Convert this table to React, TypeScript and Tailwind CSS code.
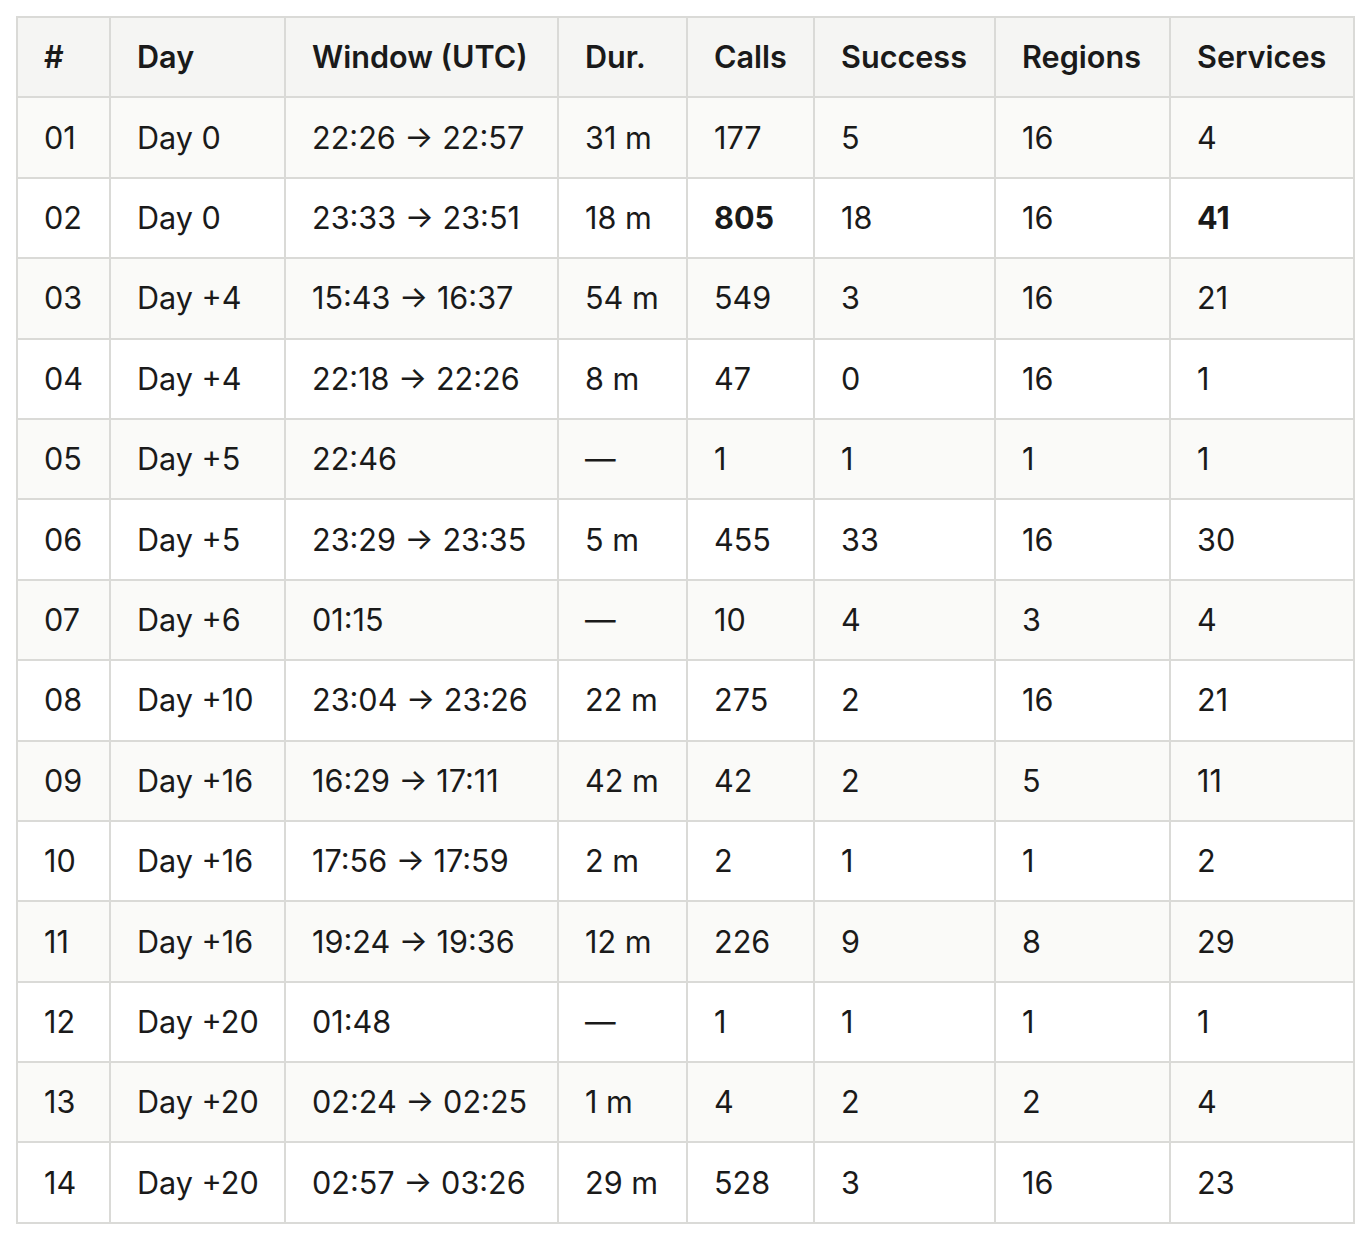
const rows: [string, string, string, string, string, string, string, string][] = [
  ["01", "Day 0", "22:26 → 22:57", "31 m", "177", "5", "16", "4"],
  ["02", "Day 0", "23:33 → 23:51", "18 m", "805", "18", "16", "41"],
  ["03", "Day +4", "15:43 → 16:37", "54 m", "549", "3", "16", "21"],
  ["04", "Day +4", "22:18 → 22:26", "8 m", "47", "0", "16", "1"],
  ["05", "Day +5", "22:46", "—", "1", "1", "1", "1"],
  ["06", "Day +5", "23:29 → 23:35", "5 m", "455", "33", "16", "30"],
  ["07", "Day +6", "01:15", "—", "10", "4", "3", "4"],
  ["08", "Day +10", "23:04 → 23:26", "22 m", "275", "2", "16", "21"],
  ["09", "Day +16", "16:29 → 17:11", "42 m", "42", "2", "5", "11"],
  ["10", "Day +16", "17:56 → 17:59", "2 m", "2", "1", "1", "2"],
  ["11", "Day +16", "19:24 → 19:36", "12 m", "226", "9", "8", "29"],
  ["12", "Day +20", "01:48", "—", "1", "1", "1", "1"],
  ["13", "Day +20", "02:24 → 02:25", "1 m", "4", "2", "2", "4"],
  ["14", "Day +20", "02:57 → 03:26", "29 m", "528", "3", "16", "23"],
];

const headers = ["#", "Day", "Window (UTC)", "Dur.", "Calls", "Success", "Regions", "Services"];
const widths = ["w-[93px]", "w-[175px]", "w-[273px]", "w-[129px]", "w-[127px]", "w-[181px]", "w-[175px]", "w-[184px]"];

const cell = "border-2 border-[#dadad7] pl-[26px] pr-2 h-[80.4px] align-middle";

export default function App() {
  return (
    <div className="min-h-[1240px] bg-white px-4 pt-4 font-['Inter','Noto_Sans',sans-serif] text-[#1a1a1a]">
      <table className="w-[1339px] table-fixed border-collapse text-[30.6px] leading-[1.5]">
        <colgroup>
          {widths.map((w, i) => (
            <col key={i} className={w} />
          ))}
        </colgroup>
        <thead>
          <tr className="bg-[#f5f5f3]">
            {headers.map((h) => (
              <th key={h} className={`${cell} text-left font-semibold`}>
                {h}
              </th>
            ))}
          </tr>
        </thead>
        <tbody>
          {rows.map((r, i) => (
            <tr key={r[0]} className={i % 2 === 0 ? "bg-[#fafaf8]" : "bg-white"}>
              {r.map((v, j) => (
                <td
                  key={j}
                  className={`${cell} ${r[0] === "02" && (j === 4 || j === 7) ? "font-bold" : "font-normal"}`}
                >
                  {v}
                </td>
              ))}
            </tr>
          ))}
        </tbody>
      </table>
    </div>
  );
}
